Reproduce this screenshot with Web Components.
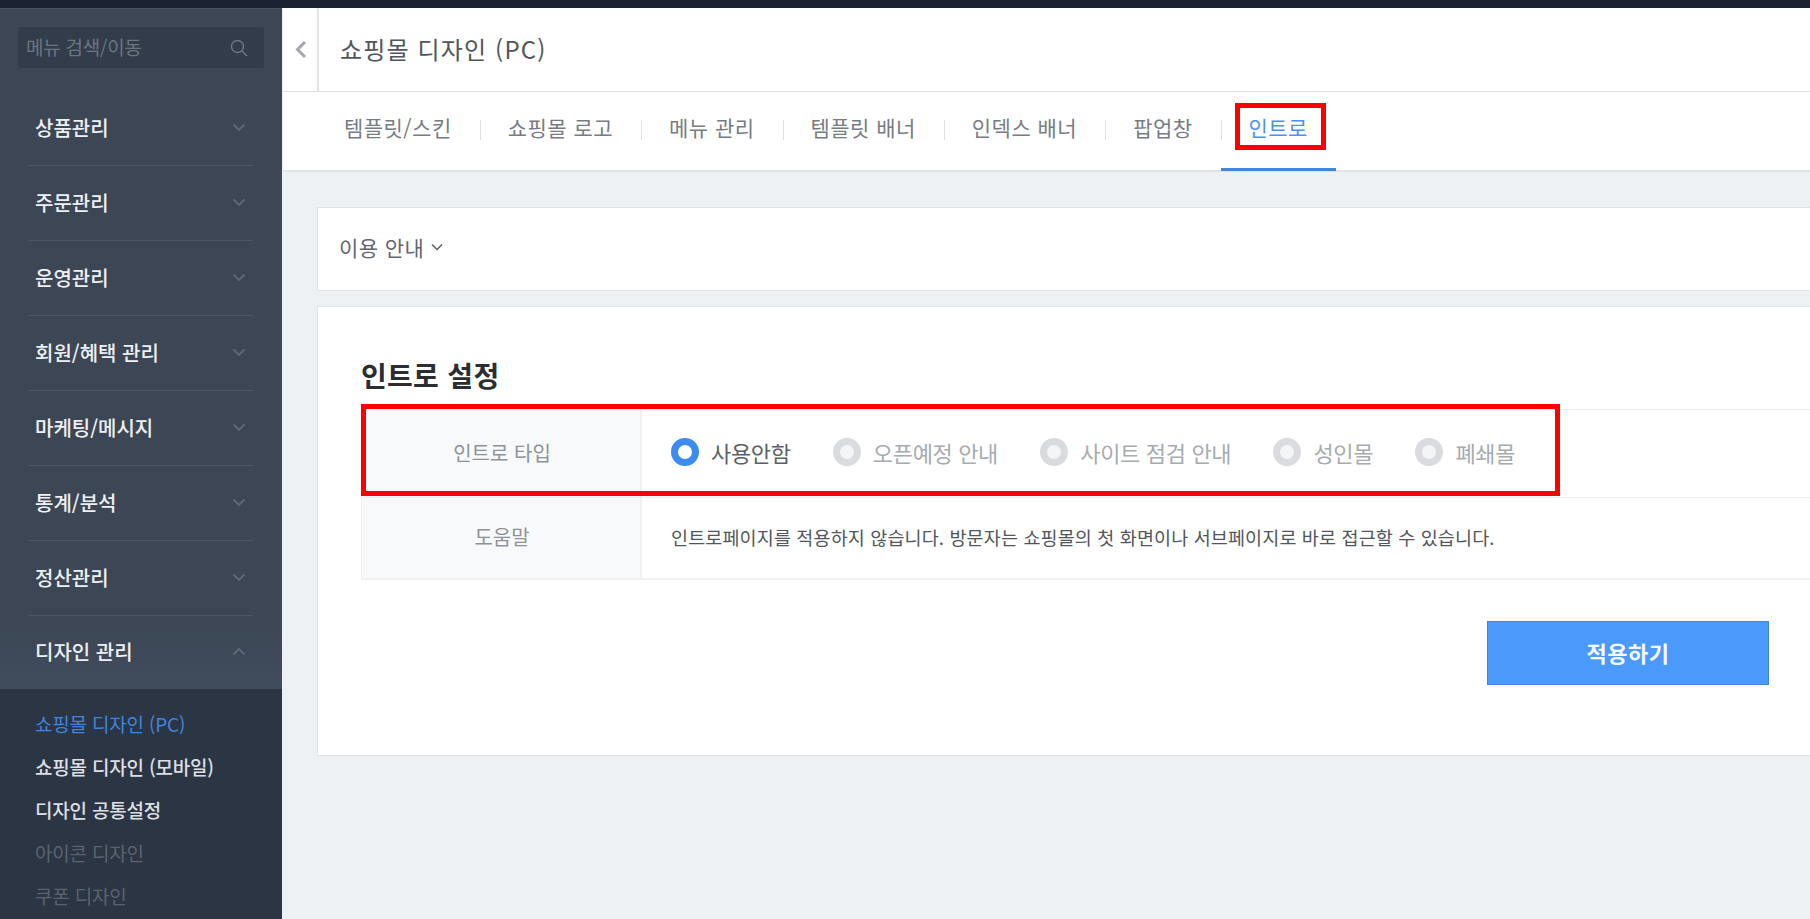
<!DOCTYPE html>
<html lang="ko"><head><meta charset="utf-8"><title>쇼핑몰 디자인 (PC)</title>
<style>
html,body{margin:0;height:100%;overflow:hidden;background:#eef1f4;font-family:"Noto Sans CJK KR","Noto Sans",sans-serif}
</style></head><body>
<app-shell>
  <side-bar slot="side">
    <side-item>상품관리</side-item><side-item>주문관리</side-item><side-item>운영관리</side-item><side-item>회원/혜택 관리</side-item><side-item>마케팅/메시지</side-item><side-item>통계/분석</side-item><side-item>정산관리</side-item><side-item open last>디자인 관리</side-item>
    <side-sub slot="sub" state="active">쇼핑몰 디자인 (PC)</side-sub><side-sub slot="sub">쇼핑몰 디자인 (모바일)</side-sub><side-sub slot="sub">디자인 공통설정</side-sub><side-sub slot="sub" state="off">아이콘 디자인</side-sub><side-sub slot="sub" state="off">쿠폰 디자인</side-sub>
  </side-bar>
  <top-header slot="main">쇼핑몰 디자인 (PC)</top-header>
  <tab-bar slot="main">
    <tab-item>템플릿/스킨</tab-item><tab-item>쇼핑몰 로고</tab-item><tab-item>메뉴 관리</tab-item><tab-item>템플릿 배너</tab-item><tab-item>인덱스 배너</tab-item><tab-item>팝업창</tab-item><tab-item active>인트로</tab-item>
  </tab-bar>
  <page-body slot="main">
    <info-card>이용 안내</info-card>
    <setting-card heading="인트로 설정">
      <form-row label="인트로 타입" marked>
        <radio-opt checked>사용안함</radio-opt><radio-opt>오픈예정 안내</radio-opt><radio-opt>사이트 점검 안내</radio-opt><radio-opt>성인몰</radio-opt><radio-opt>폐쇄몰</radio-opt>
      </form-row>
      <form-row label="도움말" help>인트로페이지를 적용하지 않습니다. 방문자는 쇼핑몰의 첫 화면이나 서브페이지로 바로 접근할 수 있습니다.</form-row>
      <apply-button slot="actions">적용하기</apply-button>
    </setting-card>
  </page-body>
</app-shell>
<script>
function def(name, css, html){
  customElements.define(name, class extends HTMLElement{
    constructor(){super();this.attachShadow({mode:'open'});}
    connectedCallback(){
      const h = typeof html==='function'?html(this):html;
      this.shadowRoot.innerHTML='<style>'+css+'</style>'+h;
    }
  });
}
const chev=(d,c,w)=>`<svg width="14" height="9" viewBox="0 0 14 9" fill="none" stroke="${c}" stroke-width="${w}"><path d="${d}"/></svg>`;
def('app-shell',`:host{display:flex;flex-direction:column;height:919px;width:1810px;overflow:hidden}
 .top{height:8px;background:#1a2130;flex:none}
 .row{display:flex;flex:1;min-height:0}
 .side{width:282px;flex:none;display:flex}
 .main{flex:1;min-width:0;display:flex;flex-direction:column;margin-left:1px;background:#eef1f4}`,
 `<div class="top"></div><div class="row"><div class="side"><slot name="side"></slot></div><div class="main"><slot name="main"></slot></div></div>`);
def('side-bar',`:host{display:flex;flex-direction:column;width:282px;background:#3c4655;border-top:1px solid #485262;box-sizing:border-box}
 .search{margin:18px 18px 23px 18px;height:41px;border-radius:3px;background:#323c4a;display:flex;align-items:center;justify-content:space-between;padding:0 16px 0 8px;color:#6c7582;font-size:19px;flex:none}
 .search span{letter-spacing:-.25px;line-height:39px;height:41px}
 .sub{flex:1;background:#2c3543;padding-top:13px;display:flex;flex-direction:column}`,
 `<div class="search"><span>메뉴 검색/이동</span><svg width="18" height="18" viewBox="0 0 18 18" fill="none" stroke="#6c7582" stroke-width="1.5"><circle cx="7.5" cy="7.5" r="6"/><path d="M12 12l5 5"/></svg></div>
  <slot></slot><div class="sub"><slot name="sub"></slot></div>`);
def('side-item',`:host{display:block;flex:none;height:75px;box-sizing:border-box;padding:0 0 0 35px;position:relative}
 :host([open]){height:73px;background:linear-gradient(#3c4655,#414c5c)}
 .in{display:flex;align-items:center;justify-content:space-between;height:73px;padding-right:36px;color:#eef0f3;font-size:20px;font-weight:500;letter-spacing:0}
 .in span{margin-bottom:1px}
 :host([open]) .in{height:71px}
 .sep{position:absolute;left:28px;right:29px;bottom:0;height:1px;background:#4c5666}
 :host([last]) .sep{display:none}`,
 el=>`<div class="in"><span><slot></slot></span>${el.hasAttribute('open')?chev('M1.5 7.5L7 2l5.5 5.5','#5f6978',1.8):chev('M1.5 1.5L7 7l5.5-5.5','#5f6978',1.8)}</div><div class="sep"></div>`);
def('side-sub',`:host{display:block;height:43px;line-height:43px;padding-left:35px;font-size:19px;font-weight:500;color:#dcdfe3;letter-spacing:-.2px;white-space:nowrap}
 :host([state=active]){color:#3f86dc;font-weight:400}
 :host([state=off]){color:#5b6370;font-weight:400}`,`<slot></slot>`);
def('top-header',`:host{display:flex;flex:none;height:84px;background:#fff;border-bottom:1px solid #dcdfe3;box-sizing:border-box}
 .t{width:34px;display:flex;align-items:center;justify-content:center;border-right:2px solid #e3e5e8}
 .h{padding:0 0 2px 21px;display:flex;align-items:center;font-size:24px;color:#50565d;letter-spacing:1.15px}`,
 `<div class="t"><svg width="13" height="19" viewBox="0 0 13 19" fill="none" stroke="#a3a7ad" stroke-width="3"><path d="M11 2L3.5 9.5 11 17"/></svg></div><div class="h"><slot></slot></div>`);
def('tab-bar',`:host{display:flex;flex:none;height:80px;background:#fff;border-bottom:2px solid #dfe2e6;box-sizing:border-box;padding-left:33px}`,`<slot></slot>`);
def('tab-item',`:host{display:flex;align-items:center;position:relative;height:78px;box-sizing:border-box;padding:0 28px 8px;font-size:21px;color:#767c84;letter-spacing:.47px;white-space:nowrap}
 :host(:not(:first-child))::before{content:"";position:absolute;left:0;top:28px;height:20px;width:1px;background:#dcdfe3}
 :host([active]){color:#4a93ea}
 .u{position:absolute;left:0;right:0;bottom:-1px;height:3px;background:#3f86dc}
 .mark{position:absolute;left:14px;right:10px;top:11px;height:47px;border:5px solid #f00;box-sizing:border-box;pointer-events:none}`,
 el=>`<slot></slot>${el.hasAttribute('active')?'<i class="u"></i><i class="mark"></i>':''}`);
def('page-body',`:host{display:block;padding:35px 0 0 34px}`,`<slot></slot>`);
def('info-card',`:host{display:flex;align-items:center;gap:7px;height:84px;box-sizing:border-box;background:#fff;border:1px solid #dfe2e6;border-right:0;padding:0 0 5px 21px;margin-bottom:15px;font-size:21px;color:#62676f;letter-spacing:.4px}`,
 `<span><slot></slot></span><svg width="12" height="8" viewBox="0 0 12 8" fill="none" stroke="#5a6068" stroke-width="1.5"><path d="M1 1.5l5 5 5-5"/></svg>`);
def('setting-card',`:host{display:block;height:450px;box-sizing:border-box;background:#fff;border:1px solid #dfe2e6;border-right:0;padding:50px 0 0 43px}
 h2{margin:0 0 15px;font-size:28px;line-height:37px;font-weight:700;color:#2a2e33;letter-spacing:.3px}
 .t{border-top:1px solid #e8eaed;border-bottom:2px solid #eef0f2;border-left:1px solid #eef0f2}
 .a{display:flex;justify-content:flex-end;padding:41px 41px 0 0}`,
 el=>`<h2>${el.getAttribute('heading')}</h2><div class="t"><slot></slot></div><div class="a"><slot name="actions"></slot></div>`);
def('form-row',`:host{display:flex;position:relative;height:87px;box-sizing:border-box}
 :host([help]){height:81px}
 :host(:not(:first-child)){border-top:1px solid #eceef0}
 .l{width:280px;flex:none;background:#f8f9fb;border-right:2px solid #eff1f3;box-sizing:border-box;display:flex;align-items:center;justify-content:center;font-size:20px;color:#8d9298;letter-spacing:0;padding:0 0 3px 2px}
 :host([help]) .l{padding-bottom:3px}
 .v{flex:1;display:flex;align-items:center;gap:42.3px;padding:0 0 3px 29px;white-space:nowrap}
 :host([help]) .v{font-size:18.5px;color:#50565d;letter-spacing:.13px;padding-bottom:3px}
 .mark{position:absolute;left:-1px;top:-6px;width:1199px;height:92px;border:5px solid #f00;box-sizing:border-box;pointer-events:none}`,
 el=>`<div class="l">${el.getAttribute('label')}</div><div class="v"><slot></slot></div>${el.hasAttribute('marked')?'<i class="mark"></i>':''}`);
def('radio-opt',`:host{display:inline-flex;align-items:center;gap:12px;font-size:22px;color:#a6abb1;letter-spacing:-.35px}
 :host([checked]){color:#5a6068}
 i{width:28px;height:28px;border-radius:50%;box-sizing:border-box;border:7px solid #d9dbde;background:#f4f5f6;display:block;flex:none}
 :host([checked]) i{border-color:#3d8bee;background:#fff}`,`<i></i><span><slot></slot></span>`);
def('apply-button',`:host{display:flex;align-items:center;justify-content:center;width:282px;height:64px;box-sizing:border-box;background:#4b99fa;border:1px solid #3f86de;color:#f5f9ff;font-size:22px;font-weight:700;letter-spacing:.5px;padding-bottom:3px}`,`<slot></slot>`);
</script>
</body></html>
